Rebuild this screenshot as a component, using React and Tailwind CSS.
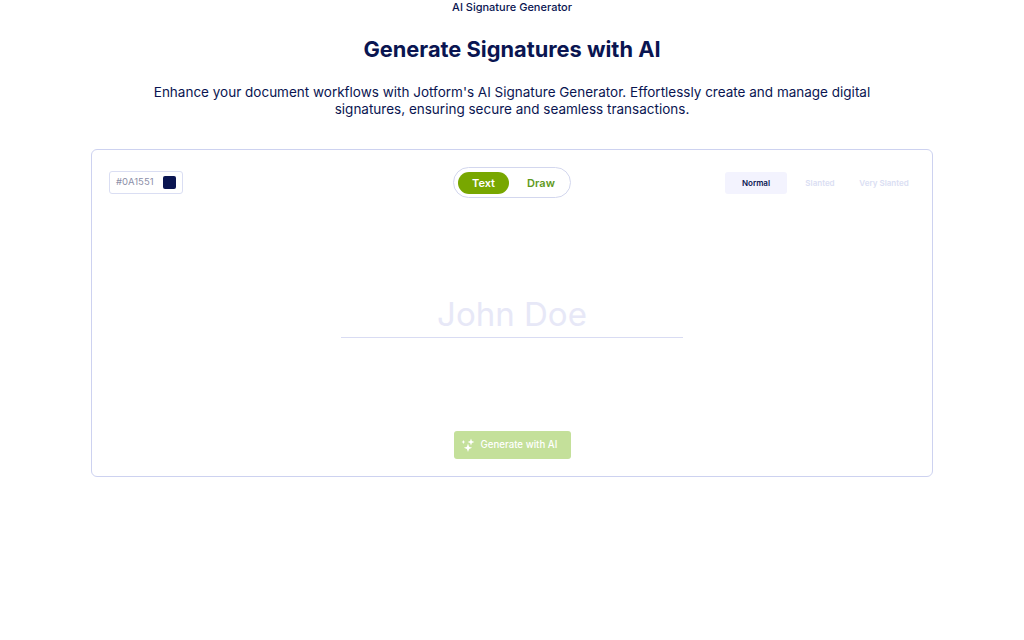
import React from 'react';

const Sparkles = () => (
  <svg width="14" height="14" viewBox="0 0 14 14" fill="white">
    <path d="M7 5.6 L8.1 8.7 L11.2 9.8 L8.1 10.9 L7 14 L5.9 10.9 L2.8 9.8 L5.9 8.7 Z" />
    <path d="M10 .6 L10.9 3.1 L13.4 4 L10.9 4.9 L10 7.4 L9.1 4.9 L6.6 4 L9.1 3.1 Z" />
    <path d="M2.4 2 L3 3.4 L4.4 4 L3 4.6 L2.4 6 L1.8 4.6 L.4 4 L1.8 3.4 Z" />
  </svg>
);

export default function App() {
  return (
    <div className="h-[640px] overflow-hidden bg-white text-[#0a1551] font-['Inter',sans-serif]">
      <p className="mt-px text-center text-[11px] font-medium leading-[13px]">AI Signature Generator</p>
      <h1 className="mt-[20px] text-center text-[21.8px] font-bold leading-[30px]">Generate Signatures with AI</h1>
      <p className="mx-auto mt-[20px] w-[760px] text-center text-[13.5px] leading-[17px]">
        Enhance your document workflows with Jotform's AI Signature Generator. Effortlessly create and manage digital signatures, ensuring secure and seamless transactions.
      </p>

      <div className="mx-auto mt-[31px] flex h-[328px] w-[842px] flex-col rounded-md border border-[#cdd2f0] px-[17px]">
        <div className="relative mt-[17px] flex items-start justify-between">
          <div className="mt-[4px] flex h-[23px] w-[74px] items-center justify-between rounded-[3px] border border-[#dadef3] pl-[6px] pr-[6px]">
            <span className="text-[9.5px] text-[#8d8fa8]">#0A1551</span>
            <span className="h-[13px] w-[13px] rounded-[2px] bg-[#0a1551]" />
          </div>

          <div className="absolute left-[344px] top-0 flex h-[31px] w-[118px] items-center rounded-full border border-[#d3d7ee] pl-1">
            <span className="flex h-[22px] w-[51px] shrink-0 items-center justify-center rounded-full bg-[#78a700] pt-px text-[11px] font-semibold text-white">Text</span>
            <span className="flex h-[22px] w-[62px] shrink-0 items-center justify-center pl-[2px] pt-px text-[11px] font-semibold text-[#5f9a1c]">Draw</span>
          </div>

          <div className="mt-[5px] flex h-[22px] items-center text-[8px] font-semibold">
            <span className="flex h-[22px] w-[62px] items-center justify-center rounded-[3px] bg-[#f3f3fe]">Normal</span>
            <span className="flex w-[66px] items-center justify-center text-[#dadef3]">Slanted</span>
            <span className="flex w-[62px] items-center justify-center text-[#dadef3]">Very Slanted</span>
          </div>
        </div>

        <div className="mx-auto mt-[101px] flex h-[43px] w-[342px] items-center justify-center border-b border-[#d9dcf3] pb-[2px] text-[33px] text-[#e7e8f7]">
          John Doe
        </div>

        <button className="mx-auto mt-[93px] flex h-[28px] w-[117px] items-center gap-[6px] rounded-[3px] bg-[#c4e09a] pl-[7px] text-[9.7px] font-medium text-white">
          <Sparkles />
          Generate with AI
        </button>
      </div>
    </div>
  );
}
